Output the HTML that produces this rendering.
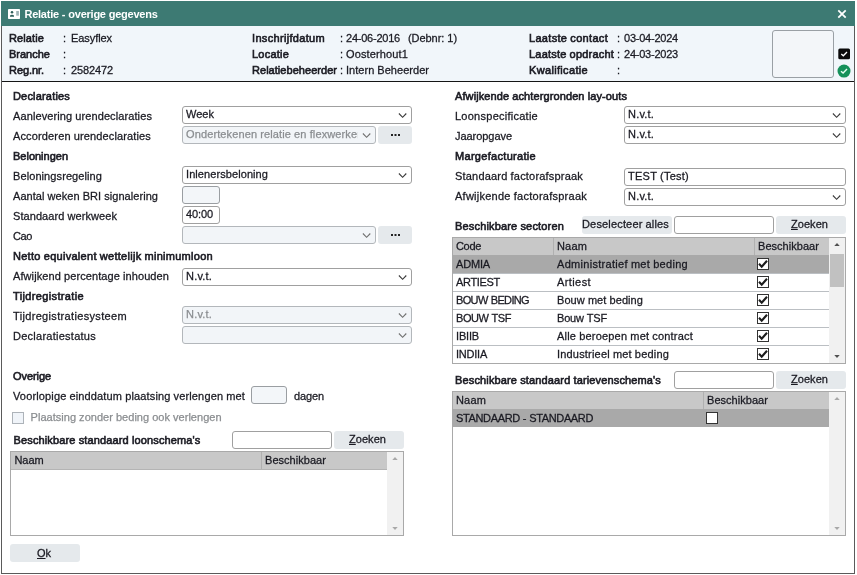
<!DOCTYPE html>
<html>
<head>
<meta charset="utf-8">
<title>Relatie - overige gegevens</title>
<style>
*{box-sizing:border-box;margin:0;padding:0}
html,body{width:857px;height:575px;background:#fff;overflow:hidden}
body{font-family:"Liberation Sans",sans-serif;font-size:11px;color:#1a1a22;position:relative}
.p{position:absolute}
.a{position:absolute;white-space:pre;line-height:14px;height:14px;-webkit-text-stroke:0.27px #1a1a22}
.M{-webkit-text-stroke:0.6px #1a1a22}
.B{font-weight:bold}
.W{color:#fff;-webkit-text-stroke:0}
.G{color:#8a8d90;-webkit-text-stroke:0.25px #8a8d90}
.box{position:absolute;border:1px solid #a0a0a0;border-radius:3px;background:#fff}
.box.dis{background:#f2f5f8;border-color:#b3b7bb}
.box.lt{background:#f3f6f9;border-color:#9a9ea2}
.btn{position:absolute;background:#e5e9ec;border-radius:3px}
.tbl{position:absolute;border:1px solid #a9a9a9;background:#fff}
.hl{position:absolute;height:1px;background:#bbbfc3}
.vl{position:absolute;width:1px;background:#b0b0b0}
.cb{position:absolute;width:12px;height:12px;border:1px solid #333;background:#fff}
svg{position:absolute;overflow:visible}
</style>
</head>
<body>
<!-- window frame -->
<div class="p" style="left:1px;top:1px;width:854px;height:573px;border:1px solid #5a5a5a;background:#fff"></div>
<div class="p" style="left:1px;top:1px;width:854px;height:25px;background:#3d7a73"></div>
<div class="p" style="left:2px;top:26px;width:852px;height:55px;background:#f1f6fa"></div>
<div class="p" style="left:2px;top:81px;width:852px;height:1px;background:#151515"></div>
<!-- title icon -->
<svg style="left:8px;top:9px" width="12" height="10" viewBox="0 0 12 10"><rect x="0" y="0" width="12" height="10" rx="0.8" fill="#fff"/><circle cx="4" cy="3.3" r="1.25" fill="#2f5f5a"/><path d="M2 7.7 L2 6.9 Q2 5.7 4 5.7 Q6 5.7 6 6.9 L6 7.7 Z" fill="#2f5f5a"/><rect x="8.2" y="2" width="2.7" height="4.7" fill="#9fb3b6"/></svg>
<!-- close X -->
<svg style="left:837px;top:10px" width="10" height="8" viewBox="0 0 10 8"><path d="M1.3 0.4 L8.7 7.6 M8.7 0.4 L1.3 7.6" stroke="#fff" stroke-width="1.8"/></svg>
<!-- header right box + icons -->
<div class="box lt" style="left:772px;top:30px;width:62px;height:48px;border-color:#9aa0a5"></div>
<svg style="left:838px;top:48px" width="13" height="12" viewBox="0 0 13 12"><g transform="translate(0.3,0.5)"><rect width="11.7" height="10.7" rx="1.5" fill="#0a0a0a"/><path d="M3 5.5 L5 7.3 L8.7 3.5" stroke="#fff" stroke-width="1.3" fill="none"/></g></svg>
<svg style="left:837px;top:64px" width="14" height="14" viewBox="0 0 14 14"><circle cx="7" cy="7.1" r="6.5" fill="#15915a"/><path d="M4 7.2 L6.1 9.1 L10 5.1" stroke="#e4fff0" stroke-width="1.4" fill="none"/></svg>

<div class="box" style="left:182px;top:106px;width:230px;height:18px"></div>
<svg style="left:398px;top:113px" width="10" height="6" viewBox="0 0 10 6"><path transform="translate(0.5,0)" d="M0.4 0.5 L4.1 4.3 L7.8 0.5" stroke="#3a3a3a" stroke-width="1.1" fill="none"/></svg>
<div class="box dis" style="left:182px;top:126px;width:194px;height:18px"></div>
<svg style="left:362px;top:133px" width="10" height="6" viewBox="0 0 10 6"><path transform="translate(0.5,0)" d="M0.4 0.5 L4.1 4.3 L7.8 0.5" stroke="#707070" stroke-width="1.1" fill="none"/></svg>
<div class="btn" style="left:378px;top:126px;width:34px;height:18px"></div>
<svg style="left:391px;top:134px" width="9" height="2" viewBox="0 0 9 2"><rect x="0" y="0" width="2" height="2" fill="#222"/><rect x="3.5" y="0" width="2" height="2" fill="#222"/><rect x="7" y="0" width="2" height="2" fill="#222"/></svg>
<div class="box" style="left:182px;top:166px;width:230px;height:18px"></div>
<svg style="left:398px;top:173px" width="10" height="6" viewBox="0 0 10 6"><path transform="translate(0.5,0)" d="M0.4 0.5 L4.1 4.3 L7.8 0.5" stroke="#3a3a3a" stroke-width="1.1" fill="none"/></svg>
<div class="box lt" style="left:182px;top:186px;width:38px;height:18px"></div>
<div class="box" style="left:182px;top:206px;width:38px;height:18px"></div>
<div class="box dis" style="left:182px;top:226px;width:194px;height:18px"></div>
<svg style="left:362px;top:233px" width="10" height="6" viewBox="0 0 10 6"><path transform="translate(0.5,0)" d="M0.4 0.5 L4.1 4.3 L7.8 0.5" stroke="#707070" stroke-width="1.1" fill="none"/></svg>
<div class="btn" style="left:378px;top:226px;width:34px;height:18px"></div>
<svg style="left:391px;top:234px" width="9" height="2" viewBox="0 0 9 2"><rect x="0" y="0" width="2" height="2" fill="#222"/><rect x="3.5" y="0" width="2" height="2" fill="#222"/><rect x="7" y="0" width="2" height="2" fill="#222"/></svg>
<div class="box" style="left:182px;top:268px;width:230px;height:18px"></div>
<svg style="left:398px;top:275px" width="10" height="6" viewBox="0 0 10 6"><path transform="translate(0.5,0)" d="M0.4 0.5 L4.1 4.3 L7.8 0.5" stroke="#3a3a3a" stroke-width="1.1" fill="none"/></svg>
<div class="box dis" style="left:182px;top:306px;width:230px;height:18px"></div>
<svg style="left:398px;top:313px" width="10" height="6" viewBox="0 0 10 6"><path transform="translate(0.5,0)" d="M0.4 0.5 L4.1 4.3 L7.8 0.5" stroke="#707070" stroke-width="1.1" fill="none"/></svg>
<div class="box dis" style="left:182px;top:326px;width:230px;height:18px"></div>
<svg style="left:398px;top:333px" width="10" height="6" viewBox="0 0 10 6"><path transform="translate(0.5,0)" d="M0.4 0.5 L4.1 4.3 L7.8 0.5" stroke="#707070" stroke-width="1.1" fill="none"/></svg>
<div class="box lt" style="left:251px;top:386px;width:36px;height:18px"></div>
<div class="p" style="left:12px;top:412px;width:12px;height:12px;border:1px solid #adb3b9;background:#f0f4f9"></div>
<div class="box" style="left:232px;top:431px;width:100px;height:18px"></div>
<div class="btn" style="left:334px;top:431px;width:70px;height:18px"></div>
<div class="tbl" style="left:10px;top:451px;width:394px;height:85px"></div>
<div class="p" style="left:11px;top:452px;width:376px;height:17px;background:#c8c8c8"></div>
<div class="p" style="left:387px;top:452px;width:16px;height:83px;background:#f1f1f1"></div>
<div class="vl" style="left:261px;top:452px;height:17px"></div>
<div class="p" style="left:11px;top:469px;width:376px;height:1px;background:#b4b4b4"></div>
<svg style="left:392px;top:457px" width="6" height="3" viewBox="0 0 6 3"><path d="M0.3 3 L3 0 L5.7 3 Z" fill="#a8a8a8"/></svg>
<svg style="left:392px;top:527px" width="6" height="3" viewBox="0 0 6 3"><path d="M0.3 0 L3 3 L5.7 0 Z" fill="#a8a8a8"/></svg>
<div class="btn" style="left:10px;top:544px;width:70px;height:18px"></div>
<div class="box" style="left:624px;top:106px;width:222px;height:18px"></div>
<svg style="left:832px;top:113px" width="10" height="6" viewBox="0 0 10 6"><path transform="translate(0.5,0)" d="M0.4 0.5 L4.1 4.3 L7.8 0.5" stroke="#3a3a3a" stroke-width="1.1" fill="none"/></svg>
<div class="box" style="left:624px;top:126px;width:222px;height:18px"></div>
<svg style="left:832px;top:133px" width="10" height="6" viewBox="0 0 10 6"><path transform="translate(0.5,0)" d="M0.4 0.5 L4.1 4.3 L7.8 0.5" stroke="#3a3a3a" stroke-width="1.1" fill="none"/></svg>
<div class="box" style="left:624px;top:168px;width:222px;height:18px"></div>
<div class="box" style="left:624px;top:188px;width:222px;height:18px"></div>
<svg style="left:832px;top:195px" width="10" height="6" viewBox="0 0 10 6"><path transform="translate(0.5,0)" d="M0.4 0.5 L4.1 4.3 L7.8 0.5" stroke="#3a3a3a" stroke-width="1.1" fill="none"/></svg>
<div class="btn" style="left:582px;top:216px;width:90px;height:18px"></div>
<div class="box" style="left:674px;top:216px;width:100px;height:18px"></div>
<div class="btn" style="left:776px;top:216px;width:70px;height:18px"></div>
<div class="tbl" style="left:452px;top:237px;width:394px;height:127px"></div>
<div class="p" style="left:453px;top:238px;width:376px;height:17px;background:#c8c8c8"></div>
<div class="p" style="left:829px;top:238px;width:16px;height:125px;background:#f1f1f1"></div>
<div class="p" style="left:830px;top:254px;width:14px;height:33px;background:#c1c1c1"></div>
<div class="p" style="left:453px;top:255px;width:376px;height:18px;background:#a9a9a9"></div>
<div class="vl" style="left:553px;top:238px;height:17px"></div>
<div class="vl" style="left:754px;top:238px;height:17px"></div>
<svg style="left:833.5px;top:243px" width="6" height="3" viewBox="0 0 6 3"><path d="M0.3 3 L3 0 L5.7 3 Z" fill="#505050"/></svg>
<svg style="left:833.5px;top:354.5px" width="6" height="3" viewBox="0 0 6 3"><path d="M0.3 0 L3 3 L5.7 0 Z" fill="#505050"/></svg>
<div class="cb" style="left:757px;top:258px"></div>
<svg style="left:757px;top:258px" width="12" height="12" viewBox="0 0 12 12"><path d="M2 5.8 L4.7 8.7 L10 2.7" stroke="#1c1c1c" stroke-width="2.1" fill="none"/></svg>
<div class="cb" style="left:757px;top:276px"></div>
<svg style="left:757px;top:276px" width="12" height="12" viewBox="0 0 12 12"><path d="M2 5.8 L4.7 8.7 L10 2.7" stroke="#1c1c1c" stroke-width="2.1" fill="none"/></svg>
<div class="hl" style="left:453px;top:273px;width:376px"></div>
<div class="cb" style="left:757px;top:294px"></div>
<svg style="left:757px;top:294px" width="12" height="12" viewBox="0 0 12 12"><path d="M2 5.8 L4.7 8.7 L10 2.7" stroke="#1c1c1c" stroke-width="2.1" fill="none"/></svg>
<div class="hl" style="left:453px;top:291px;width:376px"></div>
<div class="cb" style="left:757px;top:312px"></div>
<svg style="left:757px;top:312px" width="12" height="12" viewBox="0 0 12 12"><path d="M2 5.8 L4.7 8.7 L10 2.7" stroke="#1c1c1c" stroke-width="2.1" fill="none"/></svg>
<div class="hl" style="left:453px;top:309px;width:376px"></div>
<div class="cb" style="left:757px;top:330px"></div>
<svg style="left:757px;top:330px" width="12" height="12" viewBox="0 0 12 12"><path d="M2 5.8 L4.7 8.7 L10 2.7" stroke="#1c1c1c" stroke-width="2.1" fill="none"/></svg>
<div class="hl" style="left:453px;top:327px;width:376px"></div>
<div class="cb" style="left:757px;top:348px"></div>
<svg style="left:757px;top:348px" width="12" height="12" viewBox="0 0 12 12"><path d="M2 5.8 L4.7 8.7 L10 2.7" stroke="#1c1c1c" stroke-width="2.1" fill="none"/></svg>
<div class="hl" style="left:453px;top:345px;width:376px"></div>
<div class="box" style="left:674px;top:371px;width:100px;height:18px"></div>
<div class="btn" style="left:776px;top:371px;width:70px;height:18px"></div>
<div class="tbl" style="left:452px;top:391px;width:394px;height:145px"></div>
<div class="p" style="left:453px;top:392px;width:376px;height:17px;background:#c8c8c8"></div>
<div class="p" style="left:829px;top:392px;width:16px;height:143px;background:#f1f1f1"></div>
<div class="p" style="left:453px;top:409px;width:376px;height:18px;background:#a9a9a9"></div>
<div class="vl" style="left:703px;top:392px;height:17px"></div>
<svg style="left:833.5px;top:397px" width="6" height="3" viewBox="0 0 6 3"><path d="M0.3 3 L3 0 L5.7 3 Z" fill="#a8a8a8"/></svg>
<svg style="left:833.5px;top:527px" width="6" height="3" viewBox="0 0 6 3"><path d="M0.3 0 L3 3 L5.7 0 Z" fill="#a8a8a8"/></svg>
<div class="cb" style="left:706px;top:412px"></div>
<div id="tx" style="position:absolute;left:0;top:0;width:857px;height:575px;will-change:transform">
<div class="a B W" style="left:24.5px;top:7px;letter-spacing:-0.251px;word-spacing:0.251px;">Relatie - overige gegevens</div>
<div class="a M" style="left:9px;top:31px;letter-spacing:0.107px;">Relatie</div>
<div class="a " style="left:63px;top:31px;letter-spacing:-0.062px;">:</div>
<div class="a " style="left:71px;top:31px;letter-spacing:-0.072px;">Easyflex</div>
<div class="a M" style="left:9px;top:47px;letter-spacing:0.002px;">Branche</div>
<div class="a " style="left:63px;top:47px;letter-spacing:-0.062px;">:</div>
<div class="a M" style="left:9px;top:63px;letter-spacing:-0.067px;">Reg.nr.</div>
<div class="a " style="left:63px;top:63px;letter-spacing:-0.062px;">:</div>
<div class="a " style="left:71px;top:63px;letter-spacing:-0.118px;">2582472</div>
<div class="a M" style="left:252px;top:31px;letter-spacing:0.323px;">Inschrijfdatum</div>
<div class="a " style="left:340px;top:31px;letter-spacing:-0.062px;">:</div>
<div class="a " style="left:346px;top:31px;letter-spacing:-0.228px;">24-06-2016</div>
<div class="a M" style="left:252px;top:47px;letter-spacing:0.217px;">Locatie</div>
<div class="a " style="left:340px;top:47px;letter-spacing:-0.062px;">:</div>
<div class="a " style="left:346px;top:47px;letter-spacing:0.132px;">Oosterhout1</div>
<div class="a M" style="left:252px;top:63px;letter-spacing:0.038px;">Relatiebeheerder</div>
<div class="a " style="left:340px;top:63px;letter-spacing:-0.062px;">:</div>
<div class="a " style="left:346px;top:63px;letter-spacing:0.029px;word-spacing:-0.029px;">Intern Beheerder</div>
<div class="a " style="left:408px;top:31px;letter-spacing:-0.059px;word-spacing:0.059px;">(Debnr: 1)</div>
<div class="a M" style="left:529px;top:31px;letter-spacing:0.314px;word-spacing:-0.314px;">Laatste contact</div>
<div class="a " style="left:617px;top:31px;letter-spacing:-0.062px;">:</div>
<div class="a " style="left:624px;top:31px;letter-spacing:-0.228px;">03-04-2024</div>
<div class="a M" style="left:529px;top:47px;letter-spacing:0.203px;word-spacing:-0.203px;">Laatste opdracht</div>
<div class="a " style="left:617px;top:47px;letter-spacing:-0.062px;">:</div>
<div class="a " style="left:624px;top:47px;letter-spacing:-0.228px;">24-03-2023</div>
<div class="a M" style="left:529px;top:63px;letter-spacing:0.331px;">Kwalificatie</div>
<div class="a " style="left:617px;top:63px;letter-spacing:-0.062px;">:</div>
<div class="a M" style="left:13px;top:89px;letter-spacing:0.179px;">Declaraties</div>
<div class="a " style="left:13px;top:109px;letter-spacing:0.101px;word-spacing:-0.101px;">Aanlevering urendeclaraties</div>
<div class="a " style="left:13px;top:129px;letter-spacing:0.139px;word-spacing:-0.139px;">Accorderen urendeclaraties</div>
<div class="a M" style="left:13px;top:149px;letter-spacing:-0.006px;">Beloningen</div>
<div class="a " style="left:13px;top:169px;letter-spacing:0.091px;">Beloningsregeling</div>
<div class="a " style="left:13px;top:189px;letter-spacing:0.052px;word-spacing:-0.052px;">Aantal weken BRI signalering</div>
<div class="a " style="left:13px;top:209px;letter-spacing:0.074px;word-spacing:-0.074px;">Standaard werkweek</div>
<div class="a " style="left:13px;top:229px;letter-spacing:-0.396px;">Cao</div>
<div class="a M" style="left:13px;top:249px;letter-spacing:0.281px;word-spacing:-0.281px;">Netto equivalent wettelijk minimumloon</div>
<div class="a " style="left:13px;top:269px;letter-spacing:0.092px;word-spacing:-0.092px;">Afwijkend percentage inhouden</div>
<div class="a M" style="left:13px;top:289px;letter-spacing:0.358px;">Tijdregistratie</div>
<div class="a " style="left:13px;top:309px;letter-spacing:0.337px;">Tijdregistratiesysteem</div>
<div class="a " style="left:13px;top:329px;letter-spacing:0.258px;">Declaratiestatus</div>
<div class="a M" style="left:13px;top:369px;letter-spacing:-0.076px;">Overige</div>
<div class="a " style="left:13px;top:389px;letter-spacing:0.143px;word-spacing:-0.143px;">Voorlopige einddatum plaatsing verlengen met</div>
<div class="a " style="left:294px;top:389px;letter-spacing:-0.119px;">dagen</div>
<div class="a G" style="left:30.6px;top:410px;letter-spacing:0.024px;word-spacing:-0.024px;">Plaatsing zonder beding ook verlengen</div>
<div class="a M" style="left:13.5px;top:433px;letter-spacing:0.141px;word-spacing:-0.141px;">Beschikbare standaard loonschema's</div>
<div class="a " style="left:186px;top:107px;letter-spacing:0.020px;">Week</div>
<div class="a G" style="left:186px;top:127px;letter-spacing:0.122px;word-spacing:-0.122px;width:172.4px;overflow:hidden;">Ondertekenen relatie en flexwerker</div>
<div class="a " style="left:186px;top:167px;letter-spacing:0.079px;">Inlenersbeloning</div>
<div class="a " style="left:186px;top:207px;letter-spacing:-0.106px;">40:00</div>
<div class="a " style="left:186px;top:269px;letter-spacing:0.190px;">N.v.t.</div>
<div class="a G" style="left:186px;top:307px;letter-spacing:0.190px;">N.v.t.</div>
<div class="a " style="left:349px;top:432px;letter-spacing:0.049px;"><u>Z</u>oeken</div>
<div class="a " style="left:14.5px;top:453px;letter-spacing:-0.086px;">Naam</div>
<div class="a " style="left:265px;top:453px;letter-spacing:0.041px;">Beschikbaar</div>
<div class="a " style="left:37px;top:546px;letter-spacing:-0.031px;"><u>O</u>k</div>
<div class="a M" style="left:455px;top:89px;letter-spacing:0.104px;word-spacing:-0.104px;">Afwijkende achtergronden lay-outs</div>
<div class="a " style="left:455px;top:109px;letter-spacing:0.257px;">Loonspecificatie</div>
<div class="a " style="left:455px;top:129px;letter-spacing:-0.050px;">Jaaropgave</div>
<div class="a M" style="left:455px;top:149px;letter-spacing:0.304px;">Margefacturatie</div>
<div class="a " style="left:455px;top:169px;letter-spacing:0.194px;word-spacing:-0.194px;">Standaard factorafspraak</div>
<div class="a " style="left:455px;top:189px;letter-spacing:0.252px;word-spacing:-0.252px;">Afwijkende factorafspraak</div>
<div class="a " style="left:628px;top:107px;letter-spacing:0.190px;">N.v.t.</div>
<div class="a " style="left:628px;top:127px;letter-spacing:0.190px;">N.v.t.</div>
<div class="a " style="left:628px;top:169px;letter-spacing:0.252px;word-spacing:-0.252px;">TEST (Test)</div>
<div class="a " style="left:628px;top:189px;letter-spacing:0.190px;">N.v.t.</div>
<div class="a M" style="left:455px;top:219px;letter-spacing:0.169px;word-spacing:-0.169px;">Beschikbare sectoren</div>
<div class="a " style="left:582px;top:217px;letter-spacing:0.164px;word-spacing:-0.164px;">Deselecteer alles</div>
<div class="a " style="left:791px;top:217px;letter-spacing:0.049px;"><u>Z</u>oeken</div>
<div class="a " style="left:456px;top:239px;letter-spacing:-0.324px;">Code</div>
<div class="a " style="left:557px;top:239px;letter-spacing:0.164px;">Naam</div>
<div class="a " style="left:758px;top:239px;letter-spacing:0.041px;">Beschikbaar</div>
<div class="a " style="left:456px;top:257px;letter-spacing:-0.169px;">ADMIA</div>
<div class="a " style="left:557px;top:257px;letter-spacing:0.299px;word-spacing:-0.299px;">Administratief met beding</div>
<div class="a " style="left:456px;top:275px;letter-spacing:-0.324px;">ARTIEST</div>
<div class="a " style="left:557px;top:275px;letter-spacing:0.402px;">Artiest</div>
<div class="a " style="left:456px;top:293px;letter-spacing:-0.645px;word-spacing:0.645px;">BOUW BEDING</div>
<div class="a " style="left:557px;top:293px;letter-spacing:0.077px;word-spacing:-0.077px;">Bouw met beding</div>
<div class="a " style="left:456px;top:311px;letter-spacing:-0.408px;word-spacing:0.408px;">BOUW TSF</div>
<div class="a " style="left:557px;top:311px;letter-spacing:-0.165px;word-spacing:0.165px;">Bouw TSF</div>
<div class="a " style="left:456px;top:329px;letter-spacing:-0.169px;">IBIIB</div>
<div class="a " style="left:557px;top:329px;letter-spacing:0.197px;word-spacing:-0.197px;">Alle beroepen met contract</div>
<div class="a " style="left:456px;top:347px;letter-spacing:-0.234px;">INDIIA</div>
<div class="a " style="left:557px;top:347px;letter-spacing:0.188px;word-spacing:-0.188px;">Industrieel met beding</div>
<div class="a M" style="left:455px;top:373px;letter-spacing:0.144px;word-spacing:-0.144px;">Beschikbare standaard tarievenschema's</div>
<div class="a " style="left:791px;top:372px;letter-spacing:0.049px;"><u>Z</u>oeken</div>
<div class="a " style="left:456px;top:393px;letter-spacing:0.164px;">Naam</div>
<div class="a " style="left:707px;top:393px;letter-spacing:0.041px;">Beschikbaar</div>
<div class="a " style="left:456px;top:411px;letter-spacing:-0.359px;word-spacing:0.359px;">STANDAARD - STANDAARD</div>
</div>
</body>
</html>
